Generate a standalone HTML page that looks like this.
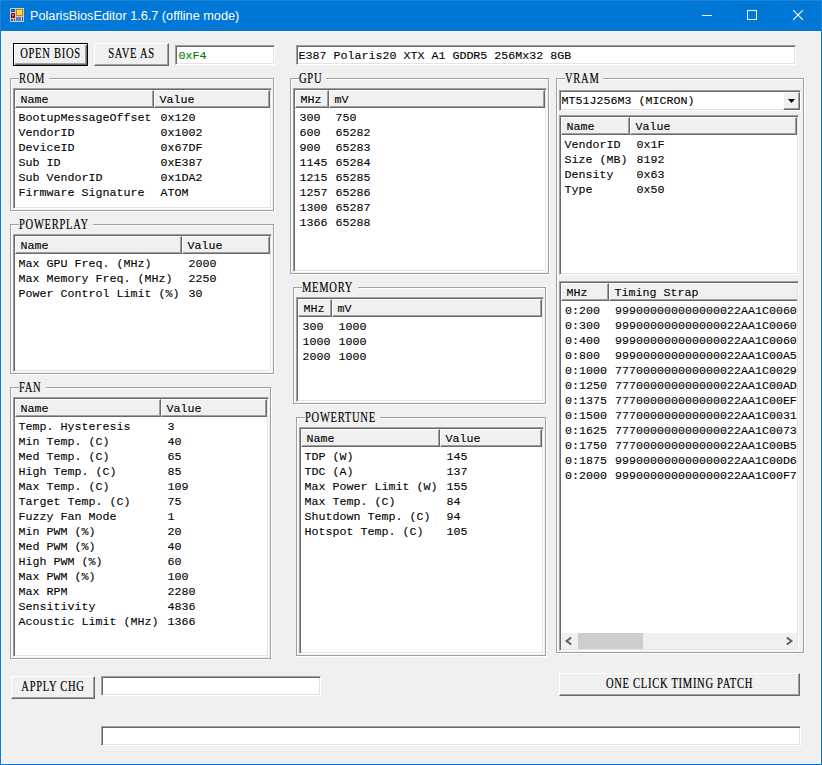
<!DOCTYPE html><html><head><meta charset="utf-8"><style>
*{margin:0;padding:0;box-sizing:border-box}
html,body{width:822px;height:765px;overflow:hidden;background:#f0f0f0}
body{position:relative;font-family:"Liberation Sans",sans-serif}
.btn,.tb,.grp,.glab,.lv,.gt,.cb{position:absolute}
#title{position:absolute;left:0;top:0;width:822px;height:31px;background:#0078d7}
#bl{position:absolute;left:0;top:31px;width:1px;height:734px;background:#0078d7}
#br{position:absolute;left:821px;top:31px;width:1px;height:734px;background:#0078d7}
#bb{position:absolute;left:0;top:764px;width:822px;height:1px;background:#0078d7}
.ttext{position:absolute;left:30px;top:9px;color:#fff;font-size:12.7px;line-height:15px;white-space:nowrap}
.mono{position:absolute;font-family:"Liberation Mono",monospace;font-size:11.667px;line-height:15px;white-space:pre;color:#000;font-weight:normal;-webkit-text-stroke:.1px currentColor}
.btn{background:#f0f0f0;border-top:1px solid #fff;border-left:1px solid #fff;border-right:1px solid #696969;border-bottom:1px solid #696969;box-shadow:inset -1px -1px 0 #a0a0a0}
.btn.def{border:1px solid #000;box-shadow:inset 1px 1px 0 #fff,inset -1px -1px 0 #696969,inset -2px -2px 0 #a0a0a0}
.bt{position:absolute;left:-20px;right:-20px;top:2px;line-height:15px;text-align:center;font-family:"Liberation Serif",serif;font-size:12px;letter-spacing:.8px;white-space:nowrap;color:#000;-webkit-text-stroke:.15px #000}
.tb{background:#fff;border-top:1px solid #a0a0a0;border-left:1px solid #a0a0a0;border-right:1px solid #fff;border-bottom:1px solid #fff;box-shadow:inset 1px 1px 0 #696969,inset -1px -1px 0 #e3e3e3}
.grpw{position:absolute;border:1px solid #fff}.grpg{position:absolute;border:1px solid #a0a0a0}
.glab{background:#f0f0f0}
.gt{font-family:"Liberation Serif",serif;font-size:12px;letter-spacing:.8px;line-height:15px;white-space:nowrap;transform:scale(.88,1.13);transform-origin:0 0;color:#000;-webkit-text-stroke:.15px #000}
.lv{background:#fff;border-top:1px solid #a0a0a0;border-left:1px solid #a0a0a0;border-right:1px solid #fff;border-bottom:1px solid #fff;box-shadow:inset 1px 1px 0 #696969,inset -1px -1px 0 #e3e3e3;overflow:hidden}
.lvin{position:absolute;left:1px;top:1px;right:1px;bottom:1px;overflow:hidden}
.hc{position:absolute;top:0;height:18px;background:#f0f0f0;border-top:1px solid #fff;border-left:1px solid #fff;border-right:1px solid #696969;border-bottom:1px solid #696969;box-shadow:inset -1px -1px 0 #a0a0a0}
</style></head><body>
<div id="title"><div style="position:absolute;left:0;top:0;width:822px;height:31px;border:1px solid #1f84d8;border-bottom:0"></div><div class="ttext">PolarisBiosEditor 1.6.7 (offline mode)</div></div>
<div id="bl"></div><div id="br"></div><div id="bb"></div><div style="position:absolute;left:1px;top:31px;width:820px;height:733px;border:1px solid #fdf8f2"></div>

<div class="btn def" style="left:13px;top:43px;width:75px;height:23px"><span class="bt" style="transform:scale(0.88,1.2)">OPEN BIOS</span></div>
<div class="btn" style="left:94px;top:43px;width:75px;height:23px"><span class="bt" style="transform:scale(0.88,1.2)">SAVE AS</span></div>
<div class="tb" style="left:175px;top:45px;width:100px;height:20px"><span class="mono" style="left:2.5px;top:3px;color:#008000">0xF4</span></div>
<div class="tb" style="left:296px;top:45px;width:500px;height:20px"><span class="mono" style="left:1.5px;top:3px;color:#000">E387 Polaris20 XTX A1 GDDR5 256Mx32 8GB</span></div>
<div class="grpw" style="left:11px;top:79px;width:264px;height:133px"></div>
<div class="grpg" style="left:10px;top:78px;width:264px;height:133px"></div>
<div class="glab" style="left:19px;top:71px;width:30px;height:12px"></div>
<span class="gt" style="left:19px;top:70.6px">ROM</span>
<div class="grpw" style="left:11px;top:225px;width:264px;height:150px"></div>
<div class="grpg" style="left:10px;top:224px;width:264px;height:150px"></div>
<div class="glab" style="left:19px;top:217px;width:74px;height:12px"></div>
<span class="gt" style="left:19px;top:216.6px">POWERPLAY</span>
<div class="grpw" style="left:11px;top:388px;width:261px;height:272px"></div>
<div class="grpg" style="left:10px;top:387px;width:261px;height:272px"></div>
<div class="glab" style="left:19px;top:380px;width:27px;height:12px"></div>
<span class="gt" style="left:19px;top:379.6px">FAN</span>
<div class="grpw" style="left:291px;top:79px;width:259px;height:196px"></div>
<div class="grpg" style="left:290px;top:78px;width:259px;height:196px"></div>
<div class="glab" style="left:299px;top:71px;width:27px;height:12px"></div>
<span class="gt" style="left:299px;top:70.6px">GPU</span>
<div class="grpw" style="left:294px;top:288px;width:253px;height:117px"></div>
<div class="grpg" style="left:293px;top:287px;width:253px;height:117px"></div>
<div class="glab" style="left:302px;top:280px;width:56px;height:12px"></div>
<span class="gt" style="left:302px;top:279.6px">MEMORY</span>
<div class="grpw" style="left:297px;top:418px;width:250px;height:239px"></div>
<div class="grpg" style="left:296px;top:417px;width:250px;height:239px"></div>
<div class="glab" style="left:305px;top:410px;width:75px;height:12px"></div>
<span class="gt" style="left:305px;top:409.6px">POWERTUNE</span>
<div class="grpw" style="left:557px;top:79px;width:248px;height:575px"></div>
<div class="grpg" style="left:556px;top:78px;width:248px;height:575px"></div>
<div class="glab" style="left:565px;top:71px;width:38px;height:12px"></div>
<span class="gt" style="left:565px;top:70.6px">VRAM</span>
<div class="lv" style="left:13px;top:88px;width:259px;height:121px"><div class="lvin"><div class="hc" style="left:0px;width:139px"></div><span class="mono" style="left:5.5px;top:3px">Name</span><div class="hc" style="left:139px;width:116px"></div><span class="mono" style="left:144.5px;top:3px">Value</span><span class="mono" style="left:3.5px;top:21px">BootupMessageOffset</span><span class="mono" style="left:145.5px;top:21px">0x120</span><span class="mono" style="left:3.5px;top:36px">VendorID</span><span class="mono" style="left:145.5px;top:36px">0x1002</span><span class="mono" style="left:3.5px;top:51px">DeviceID</span><span class="mono" style="left:145.5px;top:51px">0x67DF</span><span class="mono" style="left:3.5px;top:66px">Sub ID</span><span class="mono" style="left:145.5px;top:66px">0xE387</span><span class="mono" style="left:3.5px;top:81px">Sub VendorID</span><span class="mono" style="left:145.5px;top:81px">0x1DA2</span><span class="mono" style="left:3.5px;top:96px">Firmware Signature</span><span class="mono" style="left:145.5px;top:96px">ATOM</span></div></div>
<div class="lv" style="left:13px;top:234px;width:259px;height:138px"><div class="lvin"><div class="hc" style="left:0px;width:167px"></div><span class="mono" style="left:5.5px;top:3px">Name</span><div class="hc" style="left:167px;width:88px"></div><span class="mono" style="left:172.5px;top:3px">Value</span><span class="mono" style="left:3.5px;top:21px">Max GPU Freq. (MHz)</span><span class="mono" style="left:173.5px;top:21px">2000</span><span class="mono" style="left:3.5px;top:36px">Max Memory Freq. (MHz)</span><span class="mono" style="left:173.5px;top:36px">2250</span><span class="mono" style="left:3.5px;top:51px">Power Control Limit (%)</span><span class="mono" style="left:173.5px;top:51px">30</span></div></div>
<div class="lv" style="left:13px;top:397px;width:256px;height:260px"><div class="lvin"><div class="hc" style="left:0px;width:146px"></div><span class="mono" style="left:5.5px;top:3px">Name</span><div class="hc" style="left:146px;width:106px"></div><span class="mono" style="left:151.5px;top:3px">Value</span><span class="mono" style="left:3.5px;top:21px">Temp. Hysteresis</span><span class="mono" style="left:152.5px;top:21px">3</span><span class="mono" style="left:3.5px;top:36px">Min Temp. (C)</span><span class="mono" style="left:152.5px;top:36px">40</span><span class="mono" style="left:3.5px;top:51px">Med Temp. (C)</span><span class="mono" style="left:152.5px;top:51px">65</span><span class="mono" style="left:3.5px;top:66px">High Temp. (C)</span><span class="mono" style="left:152.5px;top:66px">85</span><span class="mono" style="left:3.5px;top:81px">Max Temp. (C)</span><span class="mono" style="left:152.5px;top:81px">109</span><span class="mono" style="left:3.5px;top:96px">Target Temp. (C)</span><span class="mono" style="left:152.5px;top:96px">75</span><span class="mono" style="left:3.5px;top:111px">Fuzzy Fan Mode</span><span class="mono" style="left:152.5px;top:111px">1</span><span class="mono" style="left:3.5px;top:126px">Min PWM (%)</span><span class="mono" style="left:152.5px;top:126px">20</span><span class="mono" style="left:3.5px;top:141px">Med PWM (%)</span><span class="mono" style="left:152.5px;top:141px">40</span><span class="mono" style="left:3.5px;top:156px">High PWM (%)</span><span class="mono" style="left:152.5px;top:156px">60</span><span class="mono" style="left:3.5px;top:171px">Max PWM (%)</span><span class="mono" style="left:152.5px;top:171px">100</span><span class="mono" style="left:3.5px;top:186px">Max RPM</span><span class="mono" style="left:152.5px;top:186px">2280</span><span class="mono" style="left:3.5px;top:201px">Sensitivity</span><span class="mono" style="left:152.5px;top:201px">4836</span><span class="mono" style="left:3.5px;top:216px">Acoustic Limit (MHz)</span><span class="mono" style="left:152.5px;top:216px">1366</span></div></div>
<div class="lv" style="left:293px;top:88px;width:254px;height:184px"><div class="lvin"><div class="hc" style="left:0px;width:34px"></div><span class="mono" style="left:5.5px;top:3px">MHz</span><div class="hc" style="left:34px;width:216px"></div><span class="mono" style="left:39.5px;top:3px">mV</span><span class="mono" style="left:4.5px;top:21px">300</span><span class="mono" style="left:40.5px;top:21px">750</span><span class="mono" style="left:4.5px;top:36px">600</span><span class="mono" style="left:40.5px;top:36px">65282</span><span class="mono" style="left:4.5px;top:51px">900</span><span class="mono" style="left:40.5px;top:51px">65283</span><span class="mono" style="left:4.5px;top:66px">1145</span><span class="mono" style="left:40.5px;top:66px">65284</span><span class="mono" style="left:4.5px;top:81px">1215</span><span class="mono" style="left:40.5px;top:81px">65285</span><span class="mono" style="left:4.5px;top:96px">1257</span><span class="mono" style="left:40.5px;top:96px">65286</span><span class="mono" style="left:4.5px;top:111px">1300</span><span class="mono" style="left:40.5px;top:111px">65287</span><span class="mono" style="left:4.5px;top:126px">1366</span><span class="mono" style="left:40.5px;top:126px">65288</span></div></div>
<div class="lv" style="left:296px;top:297px;width:248px;height:105px"><div class="lvin"><div class="hc" style="left:0px;width:34px"></div><span class="mono" style="left:5.5px;top:3px">MHz</span><div class="hc" style="left:34px;width:210px"></div><span class="mono" style="left:39.5px;top:3px">mV</span><span class="mono" style="left:4.5px;top:21px">300</span><span class="mono" style="left:40.5px;top:21px">1000</span><span class="mono" style="left:4.5px;top:36px">1000</span><span class="mono" style="left:40.5px;top:36px">1000</span><span class="mono" style="left:4.5px;top:51px">2000</span><span class="mono" style="left:40.5px;top:51px">1000</span></div></div>
<div class="lv" style="left:299px;top:427px;width:245px;height:227px"><div class="lvin"><div class="hc" style="left:0px;width:139px"></div><span class="mono" style="left:5.5px;top:3px">Name</span><div class="hc" style="left:139px;width:102px"></div><span class="mono" style="left:144.5px;top:3px">Value</span><span class="mono" style="left:3.5px;top:21px">TDP (W)</span><span class="mono" style="left:145.5px;top:21px">145</span><span class="mono" style="left:3.5px;top:36px">TDC (A)</span><span class="mono" style="left:145.5px;top:36px">137</span><span class="mono" style="left:3.5px;top:51px">Max Power Limit (W)</span><span class="mono" style="left:145.5px;top:51px">155</span><span class="mono" style="left:3.5px;top:66px">Max Temp. (C)</span><span class="mono" style="left:145.5px;top:66px">84</span><span class="mono" style="left:3.5px;top:81px">Shutdown Temp. (C)</span><span class="mono" style="left:145.5px;top:81px">94</span><span class="mono" style="left:3.5px;top:96px">Hotspot Temp. (C)</span><span class="mono" style="left:145.5px;top:96px">105</span></div></div>
<div class="tb" style="left:559px;top:90px;width:242px;height:21px"><span class="mono" style="left:1.5px;top:3px">MT51J256M3 (MICRON)</span><div class="btn" style="left:223px;top:1px;width:17px;height:18px"></div><svg style="position:absolute;left:228px;top:8px" width="7" height="4"><path d="M0 0H7L3.5 4Z" fill="#000"/></svg></div>
<div class="lv" style="left:559px;top:115px;width:240px;height:160px"><div class="lvin"><div class="hc" style="left:0px;width:69px"></div><span class="mono" style="left:5.5px;top:3px">Name</span><div class="hc" style="left:69px;width:167px"></div><span class="mono" style="left:74.5px;top:3px">Value</span><span class="mono" style="left:3.5px;top:21px">VendorID</span><span class="mono" style="left:75.5px;top:21px">0x1F</span><span class="mono" style="left:3.5px;top:36px">Size (MB)</span><span class="mono" style="left:75.5px;top:36px">8192</span><span class="mono" style="left:3.5px;top:51px">Density</span><span class="mono" style="left:75.5px;top:51px">0x63</span><span class="mono" style="left:3.5px;top:66px">Type</span><span class="mono" style="left:75.5px;top:66px">0x50</span></div></div>
<div class="lv" style="left:559px;top:281px;width:240px;height:370px"><div class="lvin"><div class="hc" style="left:0px;width:48px"></div><span class="mono" style="left:5.5px;top:3px">MHz</span><div class="hc" style="left:48px;width:700px"></div><span class="mono" style="left:53.5px;top:3px">Timing Strap</span><span class="mono" style="left:4px;top:21px">0:200</span><span class="mono" style="left:54px;top:21px">999000000000000022AA1C00605A5B3FA0550B00C38C0500</span><span class="mono" style="left:4px;top:36px">0:300</span><span class="mono" style="left:54px;top:36px">999000000000000022AA1C00605A5B3FA0550B00C38C0500</span><span class="mono" style="left:4px;top:51px">0:400</span><span class="mono" style="left:54px;top:51px">999000000000000022AA1C00605A5B3FA0550B00C38C0500</span><span class="mono" style="left:4px;top:66px">0:800</span><span class="mono" style="left:54px;top:66px">999000000000000022AA1C00A55A5B3FA0550B00C38C0500</span><span class="mono" style="left:4px;top:81px">0:1000</span><span class="mono" style="left:54px;top:81px">777000000000000022AA1C00295A5B3FA0550B00C38C0500</span><span class="mono" style="left:4px;top:96px">0:1250</span><span class="mono" style="left:54px;top:96px">777000000000000022AA1C00AD5A5B3FA0550B00C38C0500</span><span class="mono" style="left:4px;top:111px">0:1375</span><span class="mono" style="left:54px;top:111px">777000000000000022AA1C00EF5A5B3FA0550B00C38C0500</span><span class="mono" style="left:4px;top:126px">0:1500</span><span class="mono" style="left:54px;top:126px">777000000000000022AA1C00315A5B3FA0550B00C38C0500</span><span class="mono" style="left:4px;top:141px">0:1625</span><span class="mono" style="left:54px;top:141px">777000000000000022AA1C00735A5B3FA0550B00C38C0500</span><span class="mono" style="left:4px;top:156px">0:1750</span><span class="mono" style="left:54px;top:156px">777000000000000022AA1C00B55A5B3FA0550B00C38C0500</span><span class="mono" style="left:4px;top:171px">0:1875</span><span class="mono" style="left:54px;top:171px">999000000000000022AA1C00D65A5B3FA0550B00C38C0500</span><span class="mono" style="left:4px;top:186px">0:2000</span><span class="mono" style="left:54px;top:186px">999000000000000022AA1C00F75A5B3FA0550B00C38C0500</span></div><div style="position:absolute;left:1px;top:351px;width:236px;height:16px;background:#f0f0f0"><div style="position:absolute;left:17px;top:0;width:65px;height:16px;background:#cdcdcd"></div><svg style="position:absolute;left:3px;top:3px" width="9" height="10"><path d="M7.2 1.5L2.6 5L7.2 8.5" stroke="#606060" stroke-width="2" fill="none"/></svg><svg style="position:absolute;left:224px;top:3px" width="9" height="10"><path d="M1.8 1.5L6.4 5L1.8 8.5" stroke="#606060" stroke-width="2" fill="none"/></svg></div></div>
<div class="btn" style="left:11px;top:676px;width:84px;height:23px"><span class="bt" style="transform:scale(0.88,1.2)">APPLY CHG</span></div>
<div class="tb" style="left:101px;top:676px;width:220px;height:20px"></div>
<div class="btn" style="left:559px;top:673px;width:241px;height:23px"><span class="bt" style="transform:scale(0.88,1.2)">ONE CLICK TIMING PATCH</span></div>
<div class="tb" style="left:101px;top:726px;width:700px;height:20px"></div>
<svg style="position:absolute;left:702px;top:15px" width="10" height="1"><rect width="10" height="1" fill="#fff"/></svg>
<svg style="position:absolute;left:747px;top:10px" width="10" height="10"><rect x="0.5" y="0.5" width="9" height="9" fill="none" stroke="#fff"/></svg>
<svg style="position:absolute;left:793px;top:10px" width="10" height="10"><path d="M0 0L10 10M10 0L0 10" stroke="#fff" stroke-width="1.1"/></svg>
<svg style="position:absolute;left:10px;top:8px" width="14" height="14">
<rect x="0" y="0" width="14" height="14" fill="#d8c8b4"/>
<rect x="1" y="1" width="4" height="3" fill="#0a64d0"/>
<rect x="6" y="1" width="7" height="7" fill="#b8860b"/><rect x="7" y="2" width="5" height="5" fill="#ffd75a"/>
<rect x="1" y="5" width="4" height="5" fill="#a01010"/><rect x="2" y="6" width="2" height="2" fill="#e06060"/>
<rect x="1" y="11" width="2" height="2" fill="#0a64d0"/><rect x="4" y="11" width="1" height="2" fill="#0a64d0"/>
<rect x="6" y="9" width="5" height="4" fill="#5080e0"/><rect x="12" y="9" width="1" height="4" fill="#0a64d0"/>
</svg>

</body></html>
